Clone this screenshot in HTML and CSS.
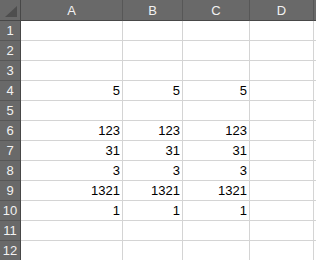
FILE: index.html
```html
<!DOCTYPE html>
<html>
<head>
<meta charset="utf-8">
<link rel="stylesheet" href="styles.css">
</head>
<body>
<div class="sheet">
  <div class="hd corner"><span class="tri"></span></div>
  <div class="hd col">A</div>
  <div class="hd col">B</div>
  <div class="hd col">C</div>
  <div class="hd col">D</div>
  <div class="hd col"></div>

  <div class="hd row">1</div><div class="c"></div><div class="c"></div><div class="c"></div><div class="c"></div><div class="c"></div>
  <div class="hd row">2</div><div class="c"></div><div class="c"></div><div class="c"></div><div class="c"></div><div class="c"></div>
  <div class="hd row">3</div><div class="c"></div><div class="c"></div><div class="c"></div><div class="c"></div><div class="c"></div>
  <div class="hd row">4</div><div class="c">5</div><div class="c">5</div><div class="c">5</div><div class="c"></div><div class="c"></div>
  <div class="hd row">5</div><div class="c"></div><div class="c"></div><div class="c"></div><div class="c"></div><div class="c"></div>
  <div class="hd row">6</div><div class="c">123</div><div class="c">123</div><div class="c">123</div><div class="c"></div><div class="c"></div>
  <div class="hd row">7</div><div class="c">31</div><div class="c">31</div><div class="c">31</div><div class="c"></div><div class="c"></div>
  <div class="hd row">8</div><div class="c">3</div><div class="c">3</div><div class="c">3</div><div class="c"></div><div class="c"></div>
  <div class="hd row">9</div><div class="c">1321</div><div class="c">1321</div><div class="c">1321</div><div class="c"></div><div class="c"></div>
  <div class="hd row">10</div><div class="c">1</div><div class="c">1</div><div class="c">1</div><div class="c"></div><div class="c"></div>
  <div class="hd row">11</div><div class="c"></div><div class="c"></div><div class="c"></div><div class="c"></div><div class="c"></div>
  <div class="hd row">12</div><div class="c"></div><div class="c"></div><div class="c"></div><div class="c"></div><div class="c"></div>
</div>
</body>
</html>
```
FILE: styles.css
```css
html, body {
  margin: 0;
  padding: 0;
  background: #ffffff;
  overflow: hidden;
}
.sheet {
  display: grid;
  grid-template-columns: 21px 102px 60px 67px 64px 1fr;
  grid-template-rows: 21px repeat(12, 20px);
  font-family: "Liberation Sans", Arial, sans-serif;
  font-size: 13px;
  width: 316px;
  overflow: hidden;
}
.sheet > div {
  box-sizing: border-box;
  min-width: 0;
}
.hd {
  background: #696969;
  color: #f2f2f2;
  border-right: 1px solid #575757;
  border-bottom: 1px solid #575757;
  display: flex;
  align-items: flex-end;
  justify-content: center;
  padding-bottom: 3px;
  line-height: 1;
}
.hd.col {
  border-bottom: 1px solid #474747;
}
.hd.row {
  border-right: 1px solid #474747;
  padding-bottom: 3px;
}
.corner {
  position: relative;
  border-right: 1px solid #474747;
  border-bottom: 1px solid #474747;
}
.tri {
  position: absolute;
  right: 3px;
  bottom: 3px;
  width: 12px;
  height: 11px;
  background: #4e4e4e;
  clip-path: polygon(100% 0, 100% 100%, 0 100%);
}
.c {
  border-right: 1px solid #d4d4d4;
  border-bottom: 1px solid #d4d4d4;
  display: flex;
  align-items: flex-end;
  justify-content: flex-end;
  padding: 0 2px 3px 0;
  line-height: 1;
  color: #000;
}
```
